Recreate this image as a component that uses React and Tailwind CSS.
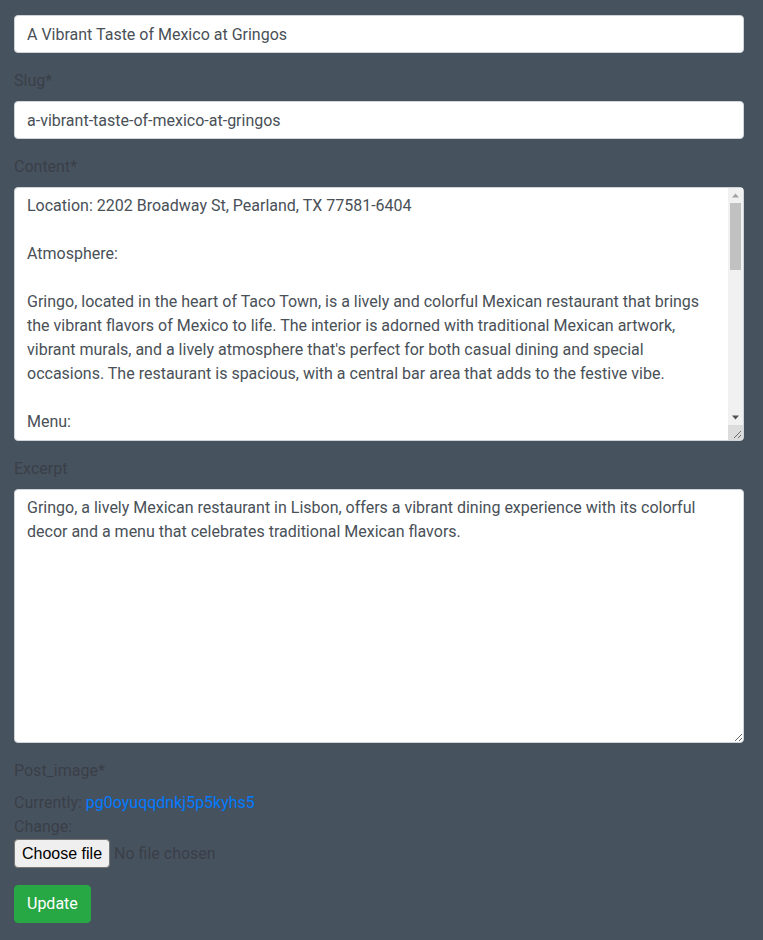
import React from 'react';

const content = `Location: 2202 Broadway St, Pearland, TX 77581-6404

Atmosphere:

Gringo, located in the heart of Taco Town, is a lively and colorful Mexican restaurant that brings the vibrant flavors of Mexico to life. The interior is adorned with traditional Mexican artwork, vibrant murals, and a lively atmosphere that's perfect for both casual dining and special occasions. The restaurant is spacious, with a central bar area that adds to the festive vibe.

Menu:

The menu at Gringo is a celebration of traditional Mexican cuisine, featuring a wide range of dishes from tacos and enchiladas to fajitas and burritos. Each dish is made with fresh ingredients and authentic spices.

Service:

The staff is friendly and attentive, making sure every guest feels welcome.`;

const excerpt =
  'Gringo, a lively Mexican restaurant in Lisbon, offers a vibrant dining experience with its colorful decor and a menu that celebrates traditional Mexican flavors.';

const inputCls =
  'block w-full h-[38px] px-3 py-1.5 bg-white border border-[#ced4da] rounded text-base text-[#495057] leading-6 outline-none';
const areaCls =
  'block w-full h-[254px] px-3 py-1.5 bg-white border border-[#ced4da] rounded text-base text-[#495057] leading-6 outline-none resize-y';

// fake scrollbar drawn over the content textarea (headless hides the native one)
const Scrollbar = () => (
  <div className="absolute top-px right-px bottom-px w-[15px] bg-[#f1f1f1] flex flex-col items-center rounded-br-[3px]">
    <svg width="15" height="15" viewBox="0 0 15 15" className="shrink-0">
      <path d="M4 9.5 L7.5 5.5 L11 9.5 Z" fill="#a3a3a3" />
    </svg>
    <div className="w-[11px] h-[67px] bg-[#c1c1c1] shrink-0" />
    <div className="flex-1" />
    <svg width="15" height="15" viewBox="0 0 15 15" className="shrink-0">
      <path d="M4 5.5 L11 5.5 L7.5 9.5 Z" fill="#505050" />
    </svg>
    <svg width="15" height="15" viewBox="0 0 15 15" className="shrink-0 bg-[#dcdcdc]">
      <path d="M13 6 L6 13 M13 10 L10 13" stroke="#6b6b6b" strokeWidth="1" />
    </svg>
  </div>
);

const App = () => {
  return (
    <div
      className="min-h-screen bg-[#47525f] text-[#3a3f47] text-base leading-6 px-[14px] pt-[15px] pb-4 w-[763px]"
      style={{ fontFamily: 'Roboto, "Liberation Sans", sans-serif' }}
    >
      <form className="w-[730px]">
        {/* Title */}
        <div className="mb-4">
          <input className={inputCls} defaultValue="A Vibrant Taste of Mexico at Gringos" />
        </div>
        {/* Slug */}
        <div className="mb-4">
          <label className="block mb-2">Slug*</label>
          <input className={inputCls} defaultValue="a-vibrant-taste-of-mexico-at-gringos" />
        </div>
        {/* Content */}
        <div className="mb-4">
          <label className="block mb-2">Content*</label>
          <div className="relative">
            <textarea className={areaCls + ' pr-[27px] overflow-hidden'} defaultValue={content} />
            <Scrollbar />
          </div>
        </div>
        {/* Excerpt */}
        <div className="mb-4">
          <label className="block mb-2">Excerpt</label>
          <textarea className={areaCls} defaultValue={excerpt} />
        </div>
        {/* Image */}
        <div className="mb-4">
          <label className="block mb-2">Post_image*</label>
          <div>
            Currently: <a href="#" className="text-[#007bff]">pg0oyuqqdnkj5p5kyhs5</a>
            <br />
            Change:
            <label className="flex items-start h-[30px] cursor-pointer">
              <input type="file" className="hidden" />
              <span
                className="h-[29px] px-[7px] flex items-center bg-[#efefef] border border-[#767676] rounded-sm text-black text-base"
                style={{ fontFamily: '"Liberation Sans", Arial, sans-serif' }}
              >
                Choose file
              </span>
              <span className="ml-[4px] leading-[29px]">No file chosen</span>
            </label>
          </div>
        </div>
        <button
          type="button"
          className="h-[38px] px-3 py-1.5 bg-[#28a745] border border-[#28a745] text-white rounded text-base leading-6"
        >
          Update
        </button>
      </form>
    </div>
  );
};

export default App;
